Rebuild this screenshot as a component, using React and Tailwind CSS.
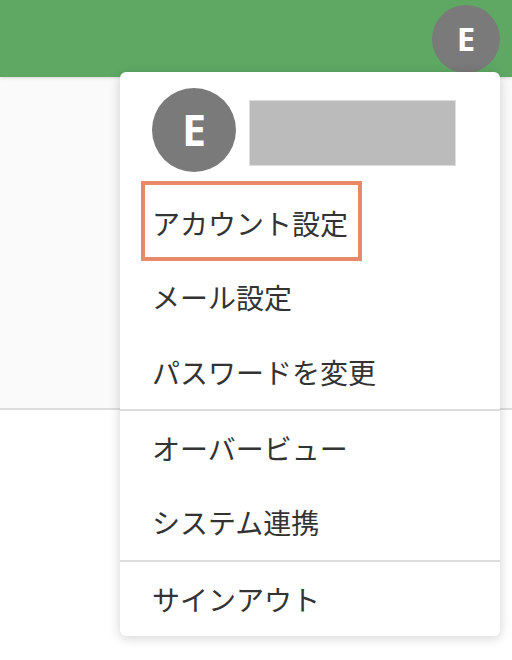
import React from "react";

const avatarFont = { fontFamily: '"Open Sans", "Liberation Sans", sans-serif' };

const MenuItem = ({ label }) => (
  <div className="h-[75px] flex items-center px-[32px] text-[28px] text-[#333]">{label}</div>
);

export default function App() {
  return (
    <div
      className="relative w-[512px] h-[660px] overflow-hidden bg-white"
      style={{ fontFamily: '"Noto Sans CJK JP", "Noto Sans", sans-serif' }}
    >
      {/* header */}
      <div className="h-[77px] bg-[#5fa864] flex items-center justify-end pr-[12px] shadow-[0_1px_3px_rgba(0,0,0,0.15)] relative z-10">
        <div
          className="w-[68px] h-[68px] rounded-full bg-[#7a7a7a] flex items-center justify-center text-white text-[33px] font-bold"
          style={avatarFont}
        >
          E
        </div>
      </div>
      <div className="h-[333px] bg-[#fafafa] border-b-2 border-[#dddddd]" />

      {/* dropdown menu */}
      <div className="absolute left-[120px] top-[72px] w-[380px] h-[564px] z-20 bg-white rounded-[6px] shadow-[0_2px_12px_rgba(0,0,0,0.18)] flex flex-col">
        <div className="h-[114px] flex items-start pt-[16px] pl-[32px]">
          <div
            className="w-[84px] h-[84px] rounded-full bg-[#7a7a7a] flex items-center justify-center text-white text-[43px] font-bold shrink-0"
            style={avatarFont}
          >
            E
          </div>
          <div className="ml-[13px] mt-[12px] w-[207px] h-[66px] bg-[#bbbbbb] border border-[#dddddd]" />
        </div>
        <div className="relative">
          <MenuItem label="アカウント設定" />
          {/* highlight box */}
          <div className="absolute left-[21px] top-[-4px] w-[221px] h-[80px] border-[4px] border-[#e8896a]" />
        </div>
        <MenuItem label="メール設定" />
        <MenuItem label="パスワードを変更" />
        <div className="h-[2px] bg-[#dddddd]" />
        <MenuItem label="オーバービュー" />
        <MenuItem label="システム連携" />
        <div className="h-[2px] bg-[#dddddd]" />
        <MenuItem label="サインアウト" />
      </div>
    </div>
  );
}
